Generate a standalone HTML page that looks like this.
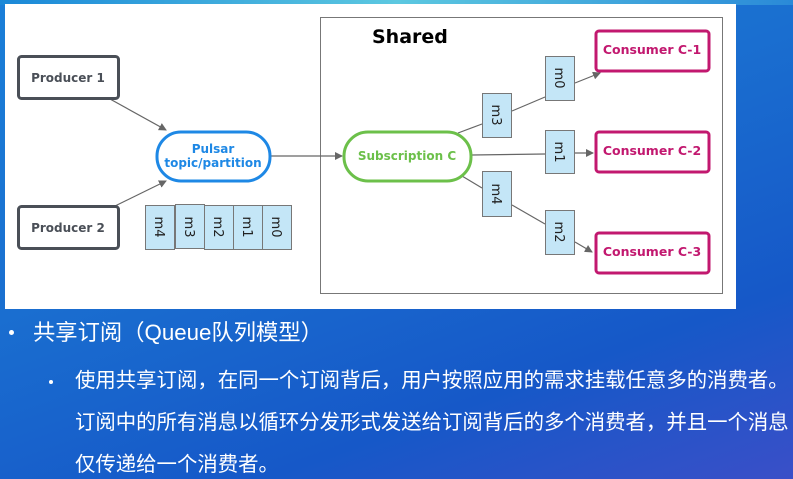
<!DOCTYPE html>
<html><head><meta charset="utf-8"><style>
html,body{margin:0;padding:0;width:793px;height:479px;overflow:hidden}
body{background:linear-gradient(160deg,#1a7fd8 0%,#1a6fd0 40%,#1658c8 75%,#3a4fc8 100%);position:relative;font-family:"Liberation Sans","Noto Sans CJK SC",sans-serif}
.top{position:absolute;left:0;top:0;width:793px;height:5px;background:linear-gradient(90deg,#1a88d8,#5cc8e0 50%,#2a8ad8)}
.panel{position:absolute;left:5px;top:4px;width:731px;height:305px;background:#fff}
svg{position:absolute;left:0;top:0}
.t{position:absolute;color:#fff;font-family:"Liberation Sans","Noto Sans CJK SC",sans-serif;white-space:nowrap;line-height:1}
.dot{position:absolute;width:5px;height:5px;border-radius:50%;background:#fff}
</style></head><body>
<div class="top"></div>
<div class="panel"></div>
<svg width="793" height="479" font-family="'DejaVu Sans',sans-serif" font-weight="bold">
<defs><marker id="a" markerWidth="8" markerHeight="8" refX="7" refY="4" orient="auto" markerUnits="userSpaceOnUse"><path d="M0,0 L8,4 L0,8z" fill="#666"/></marker></defs>
<rect x="320.5" y="17.5" width="402" height="276" fill="none" stroke="#777" stroke-width="1"/>
<text x="372" y="43" font-size="19" fill="#000">Shared</text>
<g stroke="#666" stroke-width="1.2" fill="none">
<line x1="110" y1="99" x2="166" y2="130" marker-end="url(#a)"/>
<line x1="115" y1="206" x2="166" y2="181" marker-end="url(#a)"/>
<line x1="270" y1="156" x2="342" y2="156" marker-end="url(#a)"/>
<line x1="458" y1="133" x2="482" y2="124"/>
<line x1="512" y1="111" x2="545" y2="97"/>
<line x1="575" y1="83" x2="600" y2="73" marker-end="url(#a)"/>
<line x1="472" y1="155" x2="545" y2="154"/>
<line x1="575" y1="153" x2="593" y2="153" marker-end="url(#a)"/>
<line x1="462" y1="176" x2="482" y2="188"/>
<line x1="512" y1="205" x2="545" y2="224"/>
<line x1="575" y1="242" x2="592" y2="252" marker-end="url(#a)"/>
</g>
<g fill="none" stroke="#4a4f57" stroke-width="3">
<rect x="18.5" y="56.5" width="100" height="42" rx="3"/>
<rect x="18.5" y="206.5" width="100" height="42" rx="3"/>
</g>
<text x="68" y="82" font-size="12" fill="#4a4f57" text-anchor="middle">Producer 1</text>
<text x="68" y="232" font-size="12" fill="#4a4f57" text-anchor="middle">Producer 2</text>
<rect x="157" y="132" width="113" height="49" rx="24" fill="#fff" stroke="#1e88e5" stroke-width="3"/>
<text x="213" y="153" font-size="12" fill="#1e88e5" text-anchor="middle">Pulsar</text>
<text x="213" y="167" font-size="12" fill="#1e88e5" text-anchor="middle">topic/partition</text>
<rect x="344" y="132" width="127" height="49" rx="24" fill="#fff" stroke="#6cc04a" stroke-width="3"/>
<text x="407" y="160" font-size="12" fill="#6cc04a" text-anchor="middle">Subscription C</text>
<g fill="#fff" stroke="#c2186f" stroke-width="3">
<rect x="596" y="31" width="113" height="40" rx="3"/>
<rect x="596" y="132" width="113" height="40" rx="3"/>
<rect x="596" y="233" width="113" height="40" rx="3"/>
</g>
<g font-size="12.5" fill="#c2186f" text-anchor="middle">
<text x="652" y="54">Consumer C-1</text>
<text x="652" y="155">Consumer C-2</text>
<text x="652" y="256">Consumer C-3</text>
</g>
<g fill="#c4e6f7" stroke="#777" stroke-width="1">
<rect x="145.5" y="205.5" width="29" height="44"/>
<rect x="175.5" y="204.5" width="29" height="44"/>
<rect x="204.5" y="205.5" width="29" height="44"/>
<rect x="233.5" y="205.5" width="29" height="44"/>
<rect x="262.5" y="205.5" width="29" height="44"/>
<rect x="482.5" y="93.5" width="29" height="44"/>
<rect x="545.5" y="56.5" width="29" height="44"/>
<rect x="545.5" y="130.5" width="29" height="43"/>
<rect x="482.5" y="171.5" width="29" height="45"/>
<rect x="545.5" y="210.5" width="29" height="44"/>
</g>
<g font-size="13" fill="#222" font-weight="normal" text-anchor="middle">
<text transform="translate(155,227) rotate(90)">m4</text>
<text transform="translate(185,227) rotate(90)">m3</text>
<text transform="translate(214,227) rotate(90)">m2</text>
<text transform="translate(243,227) rotate(90)">m1</text>
<text transform="translate(272,227) rotate(90)">m0</text>
<text transform="translate(492,115) rotate(90)">m3</text>
<text transform="translate(555,78) rotate(90)">m0</text>
<text transform="translate(555,152) rotate(90)">m1</text>
<text transform="translate(492,194) rotate(90)">m4</text>
<text transform="translate(555,232) rotate(90)">m2</text>
</g>
</svg>
<div class="dot" style="left:9px;top:330px"></div>
<div class="t" style="left:33px;top:322px;font-size:22.3px">共享订阅（Queue队列模型）</div>
<div class="dot" style="left:49px;top:380px;width:4px;height:4px"></div>
<div class="t" style="left:75px;top:371px;font-size:20.4px">使用共享订阅，在同一个订阅背后，用户按照应用的需求挂载任意多的消费者。</div>
<div class="t" style="left:75px;top:413px;font-size:20.4px">订阅中的所有消息以循环分发形式发送给订阅背后的多个消费者，并且一个消息</div>
<div class="t" style="left:75px;top:455px;font-size:20.4px">仅传递给一个消费者。</div>
</body></html>
